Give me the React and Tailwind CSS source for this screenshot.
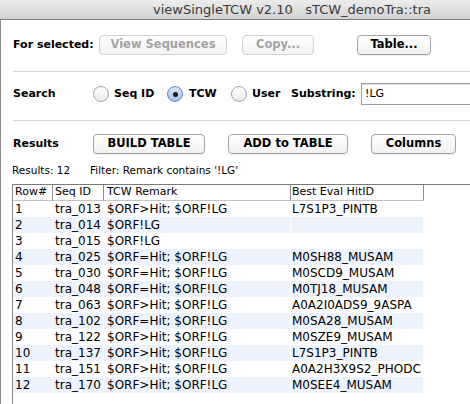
const rows = [
  ["1", "tra_013", "$ORF>Hit; $ORF!LG", "L7S1P3_PINTB"],
  ["2", "tra_014", "$ORF!LG", ""],
  ["3", "tra_015", "$ORF!LG", ""],
  ["4", "tra_025", "$ORF=Hit; $ORF!LG", "M0SH88_MUSAM"],
  ["5", "tra_030", "$ORF=Hit; $ORF!LG", "M0SCD9_MUSAM"],
  ["6", "tra_048", "$ORF=Hit; $ORF!LG", "M0TJ18_MUSAM"],
  ["7", "tra_063", "$ORF>Hit; $ORF!LG", "A0A2I0ADS9_9ASPA"],
  ["8", "tra_102", "$ORF=Hit; $ORF!LG", "M0SA28_MUSAM"],
  ["9", "tra_122", "$ORF>Hit; $ORF!LG", "M0SZE9_MUSAM"],
  ["10", "tra_137", "$ORF>Hit; $ORF!LG", "L7S1P3_PINTB"],
  ["11", "tra_151", "$ORF>Hit; $ORF!LG", "A0A2H3X9S2_PHODC"],
  ["12", "tra_170", "$ORF>Hit; $ORF!LG", "M0SEE4_MUSAM"],
];

function Btn({ children, w, disabled }) {
  return (
    <div
      className={`h-[20px] ${w} shrink-0 rounded-[4px] border flex items-center justify-center font-bold text-[11.5px] whitespace-nowrap bg-linear-to-b from-white to-[#f1f1f1] ${
        disabled ? "border-[#d2d2d2] text-[#a3a3a3]" : "border-[#a3a3a3] text-black shadow-[0_1px_0_rgba(0,0,0,0.08)]"
      }`}
    >
      {children}
    </div>
  );
}

function Radio({ checked }) {
  return checked ? (
    <div className="w-[16px] h-[16px] rounded-full border border-[#5f86bd] bg-linear-to-b from-[#d9e8fb] to-[#9fc3ef] flex items-center justify-center shrink-0">
      <div className="w-[5px] h-[5px] rounded-full bg-[#1a1a1a]" />
    </div>
  ) : (
    <div className="w-[16px] h-[16px] rounded-full border border-[#a5a5a5] bg-linear-to-b from-white to-[#e9e9e9] shrink-0" />
  );
}

const cols = ["w-[40px]", "w-[51px]", "w-[187px]", "w-[133px]"];
const pads = ["pl-[2px]", "pl-[2px]", "pl-[3px]", "pl-[1px]"];

export default function App() {
  return (
    <div className="w-[470px] h-[404px] overflow-hidden bg-white flex flex-col font-['DejaVu_Sans',sans-serif] text-black">
      <div className="h-[20px] shrink-0 bg-linear-to-b from-[#ececec] to-[#d3d3d3] border-b border-[#7d7d7d] flex items-center pl-[153px] text-[13px] text-[#3a3a3a] whitespace-pre">
        viewSingleTCW v2.10   sTCW_demoTra::tra
      </div>
      <div className="flex-1 flex flex-col border-l border-[#8a8a8a] min-h-0">
        <div className="mt-[15px] h-[20px] flex items-center pl-[12px]">
          <div className="w-[86px] shrink-0 font-bold text-[11px] whitespace-nowrap">For selected:</div>
          <Btn w="w-[128px]" disabled>View Sequences</Btn>
          <div className="w-[15px] shrink-0" />
          <Btn w="w-[72px]" disabled>Copy...</Btn>
          <div className="w-[43px] shrink-0" />
          <Btn w="w-[74px]">Table...</Btn>
        </div>
        <div className="mt-[16px] h-px bg-[#d5d5d5] ml-[12px]" />
        <div className="mt-[11px] h-[22px] flex items-center pl-[12px] text-[11px] font-bold whitespace-nowrap">
          <div className="w-[80px] shrink-0">Search</div>
          <div className="w-[74px] shrink-0 flex items-center gap-[5px]">
            <Radio />
            <span>Seq ID</span>
          </div>
          <div className="w-[64px] shrink-0 flex items-center gap-[6px]">
            <Radio checked />
            <span>TCW</span>
          </div>
          <div className="w-[60px] shrink-0 flex items-center gap-[5px]">
            <Radio />
            <span>User</span>
          </div>
          <div className="w-[70px] shrink-0">Substring:</div>
          <div className="h-[22px] w-[140px] shrink-0 border border-[#9e9e9e] shadow-[inset_0_1px_1px_rgba(0,0,0,0.15)] flex items-center pl-[3px] font-normal text-[11px]">
            !LG
          </div>
        </div>
        <div className="mt-[15px] h-px bg-[#d5d5d5] ml-[12px]" />
        <div className="mt-[13px] h-[20px] flex items-center pl-[12px]">
          <div className="w-[80px] shrink-0 font-bold text-[11px]">Results</div>
          <Btn w="w-[112px]">BUILD TABLE</Btn>
          <div className="w-[23px] shrink-0" />
          <Btn w="w-[120px]">ADD to TABLE</Btn>
          <div className="w-[23px] shrink-0" />
          <Btn w="w-[85px]">Columns</Btn>
        </div>
        <div className="mt-[10px] h-[14px] flex items-center pl-[11px] text-[10.5px] whitespace-nowrap">
          <span className="w-[78px] shrink-0">Results: 12</span>
          <span>Filter: Remark contains '!LG'</span>
        </div>
        <div className="mt-[6px] ml-[11px] flex-1 border-l border-t border-[#7a7a7a] border-l-[#8a8a8a]">
          <div className="h-[16px] flex text-[11px]">
            {["Row#", "Seq ID", "TCW Remark", "Best Eval HitID"].map((h, i) => (
              <div
                key={h}
                className={`${cols[i]} ${pads[i]} shrink-0 h-[16px] flex items-center border-r border-b border-r-[#8e8e8e] border-b-[#c4c4c4] whitespace-nowrap`}
              >
                {h}
              </div>
            ))}
          </div>
          {rows.map((r, ri) => (
            <div key={ri} className="h-[16px] flex text-[12px]">
              {r.map((c, i) => (
                <div
                  key={i}
                  className={`${cols[i]} ${pads[i]} shrink-0 h-[16px] flex items-center border-r border-white whitespace-nowrap ${
                    ri % 2 === 1 ? "bg-[#edf3fe]" : "bg-white"
                  }`}
                >
                  {c}
                </div>
              ))}
            </div>
          ))}
        </div>
      </div>
    </div>
  );
}
